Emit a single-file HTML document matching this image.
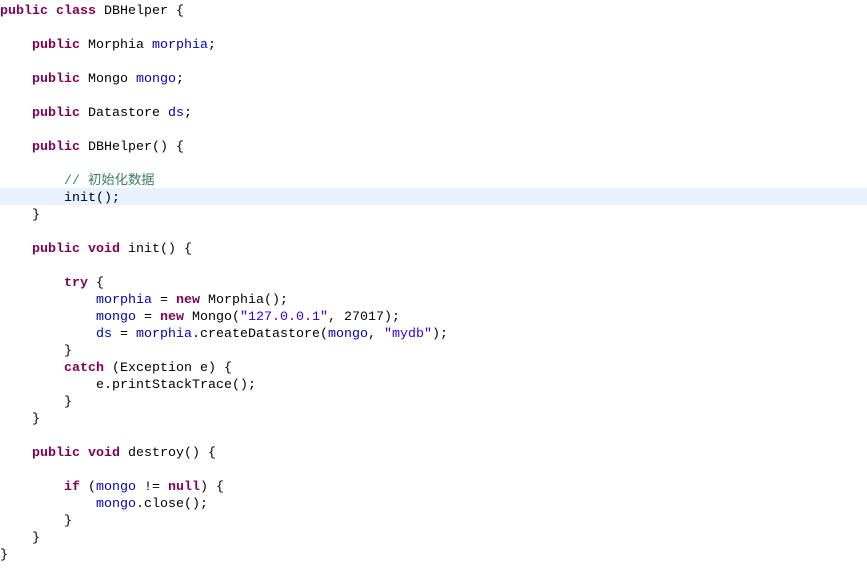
<!DOCTYPE html>
<html><head><meta charset="utf-8"><style>
body{margin:0;background:#fff;width:867px;height:568px;overflow:hidden}
pre{margin:0;padding-top:3px;font-family:"Liberation Mono","Noto Sans CJK SC",monospace;font-size:13.33px;line-height:17px;color:#000;position:relative}
.k{color:#7f0055;font-weight:bold}.f{color:#0000c0}.s{color:#2a00ff}.c{color:#3f7f5f}
.hl{position:absolute;left:0;top:188px;width:867px;height:17px;background:#e8f2fe}
pre span.t{position:relative}
</style></head><body>
<pre><div class="hl"></div><span class="t"><span class="k">public</span> <span class="k">class</span> DBHelper {

    <span class="k">public</span> Morphia <span class="f">morphia</span>;

    <span class="k">public</span> Mongo <span class="f">mongo</span>;

    <span class="k">public</span> Datastore <span class="f">ds</span>;

    <span class="k">public</span> DBHelper() {

        <span class="c">// 初始化数据</span>
        init();
    }

    <span class="k">public</span> <span class="k">void</span> init() {

        <span class="k">try</span> {
            <span class="f">morphia</span> = <span class="k">new</span> Morphia();
            <span class="f">mongo</span> = <span class="k">new</span> Mongo(<span class="s">"127.0.0.1"</span>, 27017);
            <span class="f">ds</span> = <span class="f">morphia</span>.createDatastore(<span class="f">mongo</span>, <span class="s">"mydb"</span>);
        }
        <span class="k">catch</span> (Exception e) {
            e.printStackTrace();
        }
    }

    <span class="k">public</span> <span class="k">void</span> destroy() {

        <span class="k">if</span> (<span class="f">mongo</span> != <span class="k">null</span>) {
            <span class="f">mongo</span>.close();
        }
    }
}</span></pre>
</body></html>
